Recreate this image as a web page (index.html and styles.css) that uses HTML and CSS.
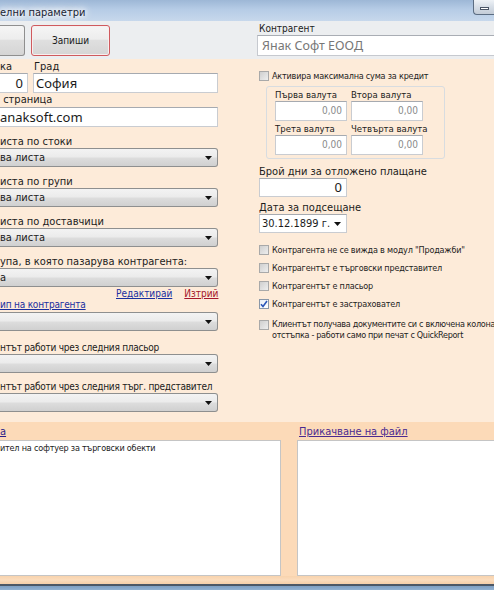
FILE: index.html
```html
<!DOCTYPE html>
<html lang="bg">
<head>
<meta charset="utf-8">
<title>Допълнителни параметри</title>
<link rel="stylesheet" href="styles.css">
</head>
<body>
<div class="window">
  <div class="titlebar">
    <div class="caption">елни параметри</div>
    <div class="winbtn"><span></span></div>
  </div>
  <div class="toolbar">
    <div class="btn btn-cut"></div>
    <div class="btn btn-save">Запиши</div>
    <div class="contr">
      <div class="contr-label">Контрагент</div>
      <div class="contr-input">Янак Софт ЕООД</div>
    </div>
  </div>
  <div class="main">
    <div class="left">
      <div class="row1">
        <div class="col-disc">
          <div class="lbl">ка</div>
          <div class="inp inp-cut num">0</div>
        </div>
        <div class="col-city">
          <div class="lbl">Град</div>
          <div class="inp big">София</div>
        </div>
      </div>
      <div class="lbl lbl-web">&nbsp;страница</div>
      <div class="inp inp-cut big">anaksoft.com</div>

      <div class="grp">
        <div class="lbl">иста по стоки</div>
        <div class="sel"><span>ва листа</span><svg class="arr" width="7" height="4" viewBox="0 0 7 4"><polygon points="0,0 7,0 3.5,4" fill="#111"/></svg></div>
      </div>
      <div class="grp">
        <div class="lbl">иста по групи</div>
        <div class="sel"><span>ва листа</span><svg class="arr" width="7" height="4" viewBox="0 0 7 4"><polygon points="0,0 7,0 3.5,4" fill="#111"/></svg></div>
      </div>
      <div class="grp">
        <div class="lbl">иста по доставчици</div>
        <div class="sel"><span>ва листа</span><svg class="arr" width="7" height="4" viewBox="0 0 7 4"><polygon points="0,0 7,0 3.5,4" fill="#111"/></svg></div>
      </div>
      <div class="grp">
        <div class="lbl">упа, в която пазарува контрагента:</div>
        <div class="sel"><span>а</span><svg class="arr" width="7" height="4" viewBox="0 0 7 4"><polygon points="0,0 7,0 3.5,4" fill="#111"/></svg></div>
      </div>
      <div class="links">
        <a class="lnk-edit">Редактирай</a>
        <a class="lnk-del">Изтрий</a>
      </div>
      <a class="lnk-type">ип на контрагента</a>
      <div class="sel sel-5"><span></span><svg class="arr" width="7" height="4" viewBox="0 0 7 4"><polygon points="0,0 7,0 3.5,4" fill="#111"/></svg></div>
      <div class="grp grp-b">
        <div class="lbl lbl-sm">нтът работи чрез следния пласьор</div>
        <div class="sel"><span></span><svg class="arr" width="7" height="4" viewBox="0 0 7 4"><polygon points="0,0 7,0 3.5,4" fill="#111"/></svg></div>
      </div>
      <div class="grp grp-c">
        <div class="lbl lbl-sm">нтът работи чрез следния търг. представител</div>
        <div class="sel"><span></span><svg class="arr" width="7" height="4" viewBox="0 0 7 4"><polygon points="0,0 7,0 3.5,4" fill="#111"/></svg></div>
      </div>
    </div>

    <div class="right">
      <div class="chk chk-credit"><span class="box"></span>Активира максимална сума за кредит</div>
      <div class="gbox">
        <div class="cur-row">
          <div class="cur"><div class="slbl">Първа валута</div><div class="inp cinp">0,00</div></div>
          <div class="cur"><div class="slbl">Втора валута</div><div class="inp cinp">0,00</div></div>
        </div>
        <div class="cur-row">
          <div class="cur"><div class="slbl">Трета валута</div><div class="inp cinp">0,00</div></div>
          <div class="cur"><div class="slbl">Четвърта валута</div><div class="inp cinp">0,00</div></div>
        </div>
      </div>
      <div class="lbl lbl-days">Брой дни за отложено плащане</div>
      <div class="inp small-inp num">0</div>
      <div class="lbl lbl-date">Дата за подсещане</div>
      <div class="date"><span>30.12.1899 г.</span><svg class="arr" width="7" height="4" viewBox="0 0 7 4"><polygon points="0,0 7,0 3.5,4" fill="#111"/></svg></div>
      <div class="checks">
        <div class="chk"><span class="box"></span>Контрагента не се вижда в модул "Продажби"</div>
        <div class="chk"><span class="box"></span>Контрагентът е търговски представител</div>
        <div class="chk"><span class="box"></span>Контрагентът е пласьор</div>
        <div class="chk"><span class="box checked"><svg width="8" height="8" viewBox="0 0 8 8"><path d="M1 4.2 L3 6.5 L7 1" fill="none" stroke="#2b56b8" stroke-width="1.6"/></svg></span>Контрагентът е застраховател</div>
        <div class="chk chk-two"><span class="box"></span><span class="two">Клиентът получава документите си с включена колона<br>отстъпка - работи само при печат с QuickReport</span></div>
      </div>
    </div>
  </div>

  <div class="notes-head">
    <a class="lnk-note">а</a>
    <a class="lnk-file">Прикачване на файл</a>
  </div>
  <div class="notes">
    <div class="ta ta-left">ител на софтуер за търговски обекти</div>
    <div class="ta ta-right"></div>
  </div>
  <div class="bottom-peach"></div>
  <div class="taskbar"></div>
</div>
</body>
</html>
```

FILE: styles.css
```css
* { box-sizing: border-box; margin: 0; padding: 0; }
html, body { width: 494px; height: 590px; overflow: hidden; }
body {
  font-family: "DejaVu Sans Condensed", "Liberation Sans", sans-serif;
  font-size: 11px;
  color: #1b1b1b;
  background: #fdebd9;
}
.window { display: flex; flex-direction: column; width: 494px; height: 590px; }

/* title bar */
.titlebar {
  height: 21px; flex: none;
  display: flex; align-items: flex-start;
  background: linear-gradient(180deg, #9db7d6 0%, #b6cce6 45%, #c7d8ec 100%);
}
.caption {
  margin-top: 6px; padding: 0 8px 0 0;
  font-size: 11px; line-height: 14px; color: #1a2433;
  text-shadow: 0 0 4px #fff, 0 0 7px #fff, 0 0 10px #fff, 0 0 12px rgba(255,255,255,0.9);
}
.winbtn {
  margin-left: auto; width: 21px; height: 15px;
  border: 1px solid #5c6d82; border-top: none; border-right: none;
  border-radius: 0 0 0 4px;
  background: linear-gradient(#eef2f6, #d6dde6 50%, #c3ccd7);
  display: flex; align-items: center; justify-content: center;
}
.winbtn span { width: 9px; height: 3px; background: #fff; border: 1px solid #4a5566; margin-top: 3px; }

/* toolbar */
.toolbar { height: 38px; flex: none; background: #eceef0; display: flex; align-items: flex-start; }
.btn {
  height: 31px; margin-top: 4px;
  border: 1px solid #8f8f8f; border-radius: 3px;
  background: linear-gradient(#f5f5f5, #ededed 45%, #dfdfdf 50%, #d5d5d5);
  font-size: 10px; display: flex; align-items: center; justify-content: center;
}
.btn-cut { width: 25px; border-left: none; border-radius: 0 3px 3px 0; }
.btn-save { width: 79px; margin-left: 6px; border-color: #cf5a5e; box-shadow: inset 0 0 0 1px #f8eeee; }
.contr { margin-left: auto; width: 239px; padding-top: 2px; }
.contr-label { font-size: 10px; line-height: 12px; padding-left: 4px; }
.contr-input {
  margin-left: 2px; height: 21px; background: #fff;
  border: 1px solid #c6c9cf; border-top-color: #a9adb4; border-right: none;
  font-family: "Noto Sans", sans-serif; font-size: 12.5px; line-height: 19px; color: #777;
  padding-left: 4px; white-space: nowrap;
}

/* main */
.main { height: 363px; flex: none; display: flex; }
.left { width: 218px; flex: none; display: flex; flex-direction: column; padding-top: 1px; }
.lbl { height: 13px; line-height: 13px; white-space: nowrap; }
.lbl-sm { font-size: 10px; letter-spacing: -0.25px; }
.row1 { display: flex; }
.col-disc { width: 28px; }
.col-city { margin-left: 5px; flex: 1; }
.col-city .lbl { padding-left: 1px; }
.inp {
  height: 20px; background: #fff;
  border: 1px solid #c9ccd1; border-top-color: #a6aab0;
  white-space: nowrap; overflow: hidden;
}
.inp-cut { border-left: none; }
.big { font-family: "Noto Sans", sans-serif; font-size: 13px; line-height: 18px; padding-left: 2px; }
.num { text-align: right; padding-right: 4px; font-family: "Noto Sans", sans-serif; font-size: 13px; line-height: 18px; }
.lbl-web { height: 14px; line-height: 14px; }
.inp-cut.big { padding-left: 0; }

.grp { margin-top: 8px; display: flex; flex-direction: column; }
.sel {
  height: 19px; display: flex; align-items: center;
  border: 1px solid #8e8f8f; border-left: none; border-radius: 0 3px 3px 0;
  background: linear-gradient(#f3f3f3, #ebebeb 48%, #dddddd 52%, #d0d0d0);
  white-space: nowrap;
}
.sel span { flex: 1; line-height: 17px; }
.arr { flex: none; margin-right: 5px; }

.links { display: flex; height: 11px; line-height: 11px; margin-top: 1px; font-size: 10px; }
.links a { text-decoration: underline; }
.lnk-edit { margin-left: 116px; color: #1a2fa0; }
.lnk-del { margin-left: 12px; color: #a4162a; }
.lnk-type { height: 11px; line-height: 11px; color: #1a2fa0; text-decoration: underline; white-space: nowrap; font-size: 10px; letter-spacing: -0.2px; }
.sel-5 { margin-top: 2px; }
.grp-b { margin-top: 10px; }
.grp-c { margin-top: 7px; }

.right { margin-left: 41px; width: 235px; flex: none; display: flex; flex-direction: column; }
.chk { display: flex; align-items: center; font-size: 9px; letter-spacing: -0.2px; white-space: nowrap; height: 18px; color: #1d1d1d; }
.box {
  flex: none; width: 10px; height: 10px; margin-right: 3px;
  border: 1px solid #a9a9a9;
  background: linear-gradient(135deg, #cfcfcf, #eeeeee);
  display: flex; align-items: center; justify-content: center;
}
.box.checked { background: linear-gradient(135deg, #e9eef5, #ffffff); border-color: #8a97a8; }
.chk-credit { margin-top: 10px; height: 14px; }
.gbox {
  margin-top: 3px; margin-left: 7px; width: 179px;
  border: 1px solid #d8dce0; border-radius: 3px;
  padding: 2px 0 3px 8px;
}
.cur-row { display: flex; gap: 4px; }
.cur { width: 72px; }
.slbl { font-size: 9.5px; height: 12px; line-height: 12px; white-space: nowrap; }
.cinp { height: 20px; text-align: right; padding-right: 4px; color: #8a8a8a; font-size: 10px; line-height: 18px; }
.cur-row + .cur-row { margin-top: 2px; }
.lbl-days { margin-top: 6px; }
.small-inp { width: 88px; height: 19px; line-height: 17px; }
.lbl-date { margin-top: 4px; }
.date {
  width: 88px; height: 19px; display: flex; align-items: center;
  background: #fff; border: 1px solid #c9ccd1; border-top-color: #a6aab0;
}
.date span { flex: 1; padding-left: 2px; }
.checks { margin-top: 8px; display: flex; flex-direction: column; }
.chk-two { margin-top: 6px; height: 22px; align-items: flex-start; }
.chk-two .box { margin-top: 1px; }
.two { line-height: 11px; letter-spacing: -0.32px; }

/* notes */
.notes-head { height: 18px; flex: none; background: #fcdab8; display: flex; align-items: center; }
.notes-head a { text-decoration: underline; }
.lnk-note { color: #2a1f8a; width: 299px; }
.lnk-file { color: #4a2a90; }
.notes { height: 136px; flex: none; display: flex; background: #fcdab8; }
.ta { background: #fff; border: 1px solid #c5c5c5; }
.ta-left { width: 281px; border-left: none; font-size: 9px; letter-spacing: -0.2px; padding-top: 2px; white-space: nowrap; overflow: hidden; }
.ta-right { margin-left: 16px; flex: 1; border-right: none; }
.bottom-peach { height: 8px; flex: none; background: linear-gradient(#f8d3ad, #fbdcbd 50%, #f6cfa8); }
.taskbar { height: 6px; flex: none; background: linear-gradient(#4d5866 0 2px, #7f9fc2 2px, #93b2d2); }
```
